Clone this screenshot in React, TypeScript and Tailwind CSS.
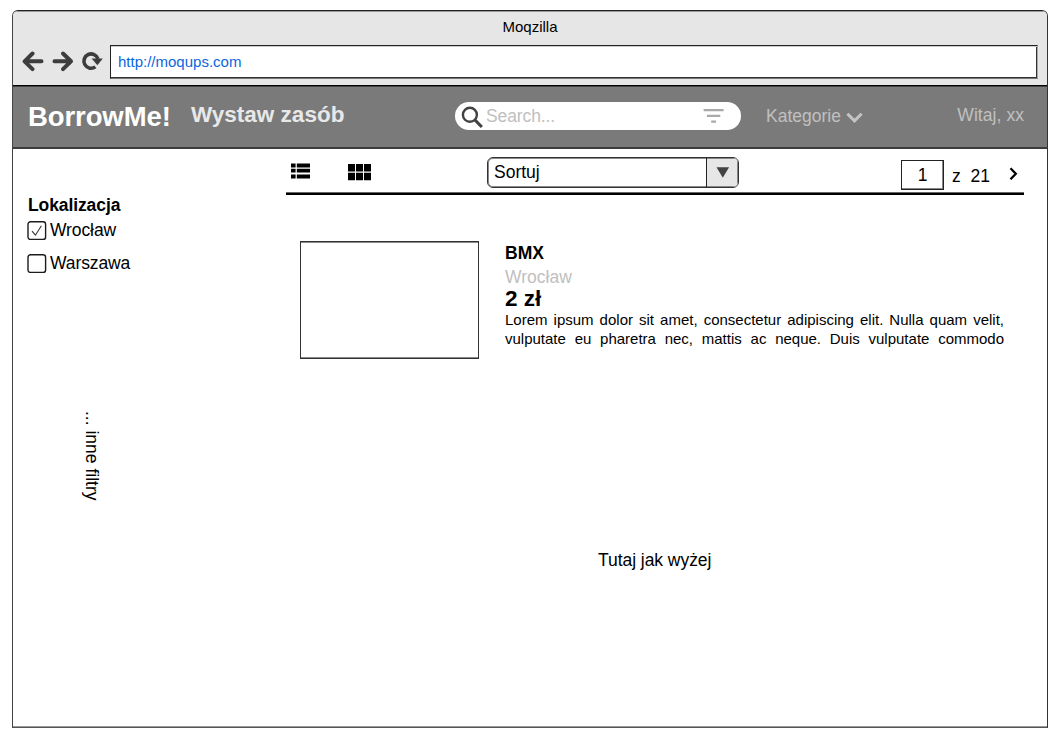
import type { ReactNode } from "react";

function BackArrow() {
  return (
    <svg width="22" height="22" viewBox="0 0 22 22" fill="none" stroke="#3d3d3d" strokeWidth="4" strokeLinecap="round" strokeLinejoin="round">
      <path d="M10.5 3.5L2.6 11.3L10.5 19.1M3.5 11.3H19.5" />
    </svg>
  );
}

function ForwardArrow() {
  return (
    <svg width="22" height="22" viewBox="0 0 22 22" fill="none" stroke="#3d3d3d" strokeWidth="4" strokeLinecap="round" strokeLinejoin="round">
      <path d="M11 3.5L19 11.3L11 19.1M18.5 11.3H2.5" />
    </svg>
  );
}

function Reload() {
  return (
    <svg width="22" height="22" viewBox="0 0 22 22">
      <path d="M14.4 16.9A7.2 7.2 0 1 1 17 8.9" fill="none" stroke="#3d3d3d" strokeWidth="3.6" />
      <path d="M10.6 8.6H21.8L16.4 15.2Z" fill="#3d3d3d" />
    </svg>
  );
}

function BrowserChrome() {
  return (
    <div className="h-[74px] shrink-0 bg-[#e6e6e6] shadow-[inset_0_1px_0_#999]">
      <div className="h-[34px] pt-[7px] text-center text-[15px] leading-[18px]">Moqzilla</div>
      <div className="flex">
        <div className="flex w-[97px] pl-[9px] pt-[5px]">
          <BackArrow />
          <div className="w-[8px]" />
          <ForwardArrow />
          <div className="w-[7px]" />
          <Reload />
        </div>
        <div className="h-[34px] w-[928px] border border-b-[#777] border-l-[#222] border-r-[#aaa] border-t-[#222] bg-white pl-[7px] text-[15px] leading-[31px] text-[#0a66e0] shadow-[inset_0_1px_0_#ccc,inset_-1px_-1px_0_#333]">
          http://moqups.com
        </div>
      </div>
    </div>
  );
}

function NavBar() {
  return (
    <nav className="flex h-[64px] shrink-0 border-b-2 border-t border-b-[#3b3b3b] border-t-black bg-[#7a7a7a] shadow-[inset_0_1px_0_#444]">
      <div className="w-[164px] pl-[15px] pt-[15px] text-[27.5px] font-bold leading-[31px] tracking-[-0.1px] text-white">BorrowMe!</div>
      <div className="w-[278px] pl-[14px] pt-[16px] text-[22.5px] font-bold leading-[25px] text-[#e8e8e8]">Wystaw zasób</div>
      <div className="mt-[16px] flex h-[28px] w-[286px] rounded-full bg-white">
        <svg className="ml-[6px] mt-[4px]" width="23" height="23" viewBox="0 0 23 23" fill="none" stroke="#424242">
          <circle cx="8.9" cy="8.8" r="7" strokeWidth="2.4" />
          <path d="M14 14L20.8 21" strokeWidth="3.2" />
        </svg>
        <span className="ml-[2px] w-[217px] text-[17.5px] leading-[28px] tracking-[-0.1px] text-[#c0c0c0]">Search...</span>
        <svg className="mt-[7px]" width="22" height="15" viewBox="0 0 22 15" fill="#a9a9a9">
          <path d="M.6 0h20v2.2H.6zM3.9 5.8h13.4v2.2H3.9zM8.2 11.6h4.8v2.2H8.2z" />
        </svg>
      </div>
      <div className="ml-[25px] flex pt-[20px] text-[17.5px] leading-[20px] text-[#c0c0c0]">
        Kategorie
        <svg className="ml-[5px] mt-[6px]" width="18" height="13" viewBox="0 0 18 13" fill="none" stroke="#c4c4c4" strokeWidth="3">
          <path d="M1.4 1.8L8.5 8.9L15.6 1.8" />
        </svg>
      </div>
      <div className="ml-auto mr-[23px] pt-[19px] text-[17.5px] leading-[20px] tracking-[0.06px] text-[#c0c0c0]">Witaj, xx</div>
    </nav>
  );
}

function Check({ checked, children }: { checked?: boolean; children: ReactNode }) {
  return (
    <label className="flex h-[33px] text-[17.5px] leading-[20px] tracking-[-0.1px]">
      <svg className="mr-[3px] mt-[1px]" width="20" height="20" viewBox="0 0 20 20" fill="none">
        <rect x="1" y="0.8" width="17.6" height="17.6" rx="2.5" stroke="#1c1c1c" strokeWidth="1.4" />
        {checked && <path d="M5 10.2L8.4 14.2L14.4 4.8" stroke="#333" strokeWidth="1.1" />}
      </svg>
      {children}
    </label>
  );
}

function Sidebar() {
  return (
    <aside className="w-[273px] shrink-0 pl-[14px] pt-[46px]">
      <h2 className="mb-[5px] pl-[1px] text-[17.5px] font-bold leading-[20px] tracking-[-0.1px]">Lokalizacja</h2>
      <Check checked>Wrocław</Check>
      <Check>Warszawa</Check>
      <div className="ml-[55px] mt-[125px] w-[20px] whitespace-nowrap text-[17.5px] leading-[20px] [writing-mode:vertical-rl]">... inne filtry</div>
    </aside>
  );
}

function Toolbar() {
  return (
    <div className="flex h-[46px] w-[738px] border-b-2 border-black shadow-[inset_0_-1px_0_#666]">
      <svg className="ml-[5px] mt-[14px]" width="20" height="18" viewBox="0 0 20 18">
        <path d="M0 .5h4.6v4H0zM5.8.5H19v4H5.8zM0 5.8h4.6v3.8H0zM5.8 5.8H19v3.8H5.8zM0 11.5h4.6v4H0zM5.8 11.5H19v4H5.8z" />
      </svg>
      <svg className="ml-[37px] mt-[15px]" width="24" height="18" viewBox="0 0 24 18">
        <path d="M0 0h7v7.5H0zM8 0h7v7.5H8zM16 0h7v7.5H16zM0 8.8h7v7.5H0zM8 8.8h7v7.5H8zM16 8.8h7v7.5H16z" />
      </svg>
      <div className="ml-[115px] mt-[8px] flex h-[31px] w-[252px] overflow-hidden rounded-[6px] border border-[#333] bg-white shadow-[inset_0_0_0_1px_#888]">
        <span className="flex-1 pl-[6px] text-[17.5px] leading-[29px]">Sortuj</span>
        <span className="flex w-[32px] items-center justify-center border-l border-[#222] bg-[#e6e6e6] shadow-[inset_0_1px_0_#888,inset_0_-1px_0_#888,inset_-1px_0_0_#888]">
          <svg width="14" height="12" viewBox="0 0 14 12" fill="#424242">
            <path d="M.5 .2H13.1L6.8 10.8Z" />
          </svg>
        </span>
      </div>
      <div className="ml-[162px] mt-[11px] h-[30px] w-[43px] border border-[#222] text-center text-[17.5px] leading-[28px] shadow-[inset_-1px_-1px_0_#888]">1</div>
      <div className="ml-[8px] mt-[17px] whitespace-pre text-[17.5px] leading-[20px]">z  21</div>
      <svg className="ml-[18px] mt-[18px]" width="12" height="14" viewBox="0 0 12 14" fill="none" stroke="black" strokeWidth="2.3">
        <path d="M2.5 1.3L7.8 6.8L2.5 12.3" />
      </svg>
    </div>
  );
}

function Listing() {
  return (
    <article className="ml-[14px] mt-[46px] flex">
      <div className="h-[118px] w-[179px] border border-[#333] shadow-[inset_0_-1px_0_#888,inset_0_1px_0_#888]" />
      <div className="ml-[26px] w-[499px] pt-[2px]">
        <h3 className="text-[17.5px] font-bold leading-[20px]">BMX</h3>
        <p className="mt-[4px] text-[17.5px] leading-[20px] text-[#c0c0c0]">Wrocław</p>
        <p className="text-[22.5px] font-bold leading-[23px]">2 zł</p>
        <p className="text-justify text-[15px] leading-[19px] [text-align-last:justify]">
          Lorem ipsum dolor sit amet, consectetur adipiscing elit. Nulla quam velit,<br />vulputate eu pharetra nec, mattis ac neque. Duis vulputate commodo
        </p>
      </div>
    </article>
  );
}

export default function App() {
  return (
    <div className="h-[744px] w-[1061px] overflow-hidden bg-white pl-[12px] pt-[10px] font-['Liberation_Sans',Arial,sans-serif] text-black">
      <div className="flex h-[718px] w-[1036px] flex-col overflow-hidden rounded-t-[6px] border border-b-[#555] border-l-[#444] border-r-[#333] border-t-[#222] shadow-[inset_0_-1px_0_#999]">
        <BrowserChrome />
        <NavBar />
        <main className="flex flex-1">
          <Sidebar />
          <section className="flex-1">
            <Toolbar />
            <Listing />
            <p className="ml-[312px] mt-[191px] text-[17.5px] leading-[20px] tracking-[-0.05px]">Tutaj jak wyżej</p>
          </section>
        </main>
      </div>
    </div>
  );
}
